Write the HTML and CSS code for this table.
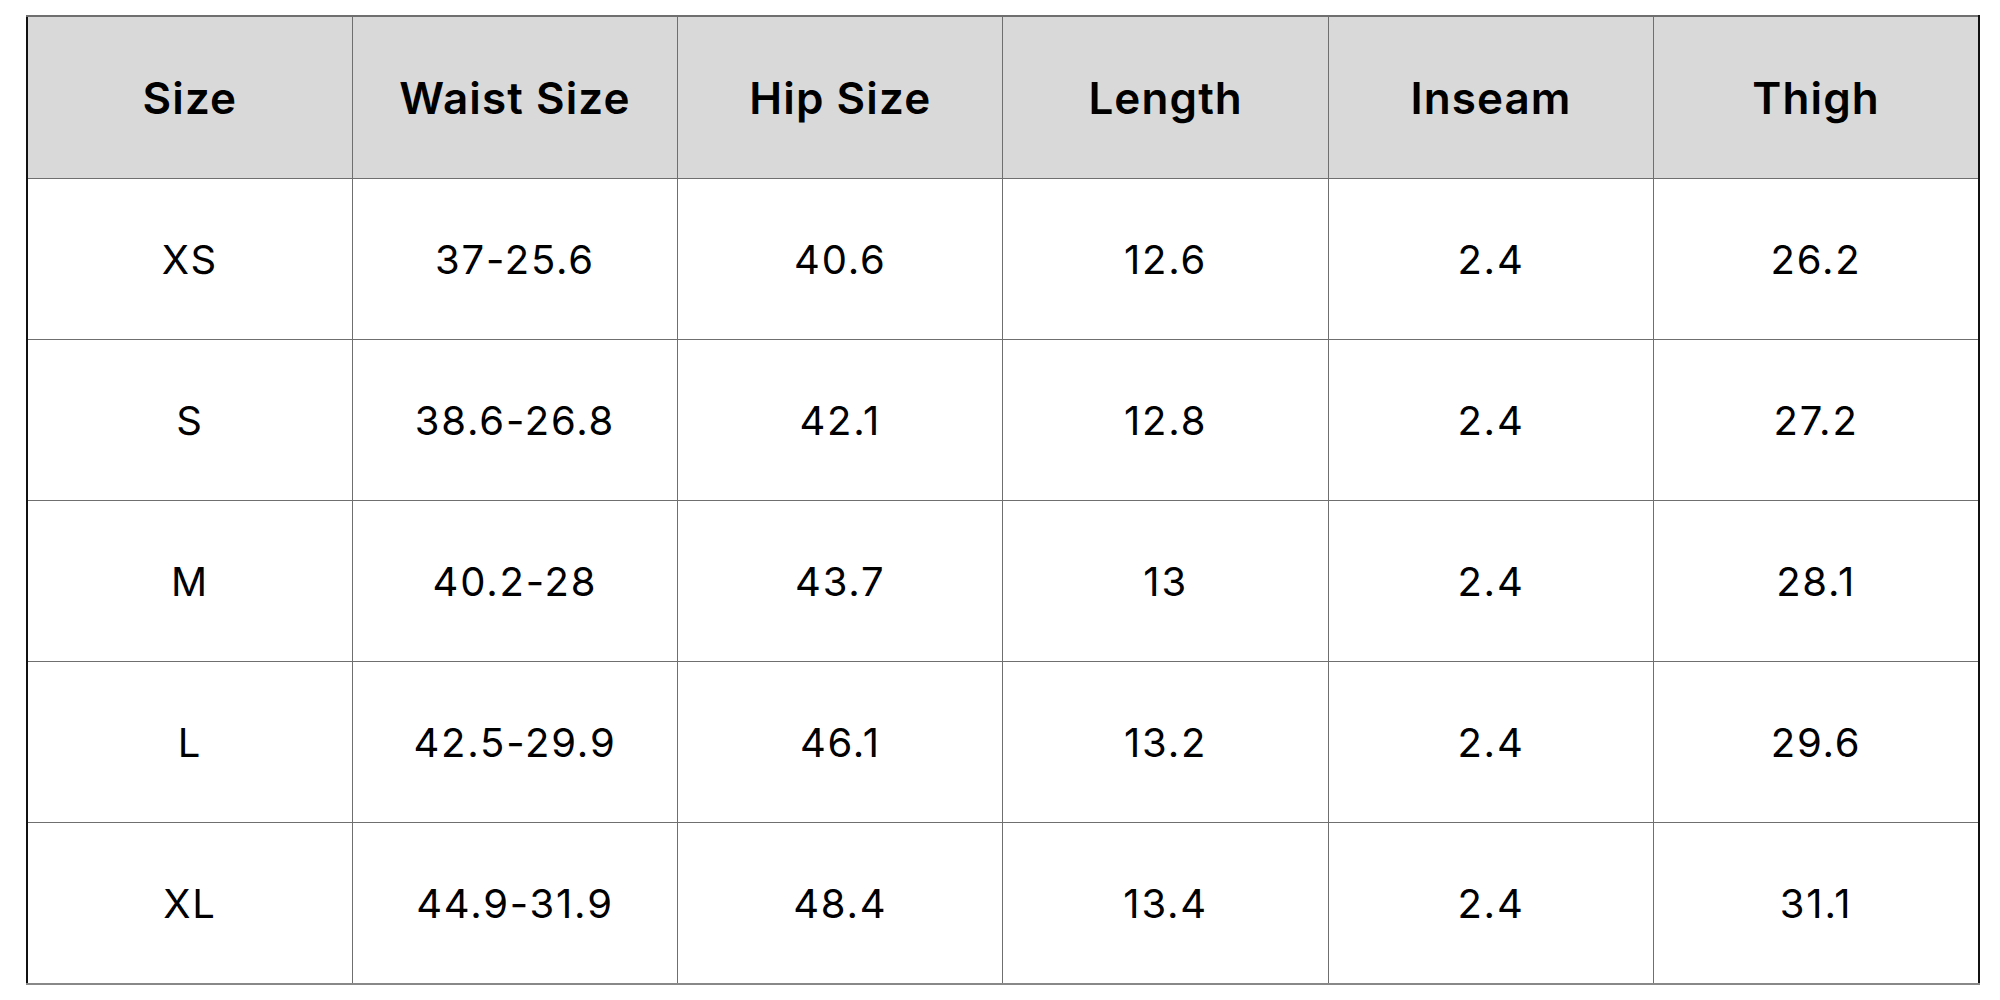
FILE: index.html
```html
<!DOCTYPE html>
<html>
<head>
<meta charset="utf-8">
<link rel="stylesheet" href="styles.css">
</head>
<body>
<table class="chart">
<thead>
<tr><th>Size</th><th>Waist Size</th><th>Hip Size</th><th>Length</th><th>Inseam</th><th>Thigh</th></tr>
</thead>
<tbody>
<tr><td>XS</td><td>37-25.6</td><td>40.6</td><td>12.6</td><td>2.4</td><td>26.2</td></tr>
<tr><td>S</td><td>38.6-26.8</td><td>42.1</td><td>12.8</td><td>2.4</td><td>27.2</td></tr>
<tr><td>M</td><td>40.2-28</td><td>43.7</td><td>13</td><td>2.4</td><td>28.1</td></tr>
<tr><td>L</td><td>42.5-29.9</td><td>46.1</td><td>13.2</td><td>2.4</td><td>29.6</td></tr>
<tr><td>XL</td><td>44.9-31.9</td><td>48.4</td><td>13.4</td><td>2.4</td><td>31.1</td></tr>
</tbody>
</table>
</body>
</html>
```

FILE: styles.css
```css
html, body {
  margin: 0;
  padding: 0;
  background: #ffffff;
}
body {
  padding: 15px 0 0 26px;
  font-family: Inter, "Open Sans", "Liberation Sans", sans-serif;
  color: #000;
}
.chart {
  border-collapse: collapse;
  table-layout: fixed;
  width: 1954px;
}
.chart th, .chart td {
  border: 1px solid #6f6f6f;
  text-align: center;
  vertical-align: middle;
  padding: 0;
  height: 160px;
}
.chart th {
  background: #d9d9d9;
  font-size: 44px;
  font-weight: 600;
  letter-spacing: 0.025em;
  height: 161px;
  border-top: 2px solid #6f6f6f;
}
.chart td {
  font-size: 40px;
  font-weight: 400;
  letter-spacing: 0.045em;
}
.chart tr > :first-child {
  border-left: 2px solid #111;
}
.chart tr > :last-child {
  border-right: 2px solid #111;
}
.chart tbody tr:last-child td {
  border-bottom: 2px solid #888;
}
```
